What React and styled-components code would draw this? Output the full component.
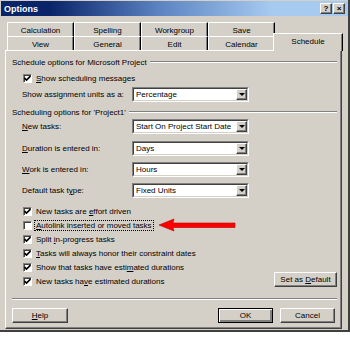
import React from 'react'
import styled, { createGlobalStyle, css } from 'styled-components'

const GlobalStyle = createGlobalStyle`
  html, body {
    margin: 0;
    padding: 0;
    background: #fff;
  }
  body {
    font-family: "Liberation Sans", Arial, sans-serif;
    font-size: 8px;
    color: #000;
  }
`

const FACE = '#d4d0c8'
const SHADOW = '#808080'
const DARK = '#404040'

const raised = css`
  border: 1px solid;
  border-color: #fff ${DARK} ${DARK} #fff;
  box-shadow: inset -1px -1px ${SHADOW};
`

const Window = styled.div`
  position: relative;
  width: 350px;
  height: 332px;
  box-sizing: border-box;
  background: ${FACE};
  border-right: 2px solid ${DARK};
  border-bottom: 2px solid ${DARK};
  display: flex;
  flex-direction: column;
`

const TitleBar = styled.div`
  height: 15px;
  margin: 1px 0 0 1px;
  padding: 0 3px;
  display: flex;
  align-items: center;
  background: linear-gradient(90deg, #0a246a 14%, #5a82c0 45%, #a6caf0 78%);
`

const Title = styled.span`
  flex: 1;
  color: #fff;
  font-weight: bold;
  font-size: 9px;
`

const CaptionButton = styled.div`
  width: 12px;
  height: 11px;
  box-sizing: border-box;
  margin-left: 1px;
  background: ${FACE};
  ${raised};
  display: flex;
  align-items: center;
  justify-content: center;
  font-weight: bold;
  font-size: 8px;
  line-height: 1;
`

const TabArea = styled.div`
  margin-top: 6px;
  padding-left: 7px;
  display: flex;
  flex-direction: column;
`

const TabRow = styled.div`
  display: flex;
  align-items: flex-end;
  height: 14px;
`

const Tab = styled.div`
  width: 67px;
  height: 14px;
  box-sizing: border-box;
  border-top: 1px solid #fff;
  border-left: 1px solid #fff;
  border-right: 1px solid #000;
  box-shadow: inset -1px 0 ${SHADOW};
  display: flex;
  align-items: center;
  justify-content: center;
  padding-top: 1px;

  ${p => p.$selected && css`
    position: relative;
    z-index: 1;
    width: 70px;
    height: 18px;
    margin: 0 0 -1px -2px;
    background: ${FACE};
    padding-top: 0;
    padding-bottom: 2px;
  `}
`

const Panel = styled.div`
  margin-left: 5px;
  width: 337px;
  height: 279px;
  box-sizing: border-box;
  ${raised};
  padding: 5px 4px 0 6px;
  display: flex;
  flex-direction: column;
  position: relative;
`

const GroupHeader = styled.div`
  height: 12px;
  display: flex;
  align-items: center;
  margin-top: ${p => p.$top || 0}px;

  &::after {
    content: '';
    flex: 1;
    margin-left: 3px;
    border-top: 1px solid ${SHADOW};
    border-bottom: 1px solid #fff;
  }
`

const FieldRow = styled.div`
  display: flex;
  align-items: center;
  height: 15px;
  margin-top: ${p => p.$top || 0}px;
  padding-left: 10px;
`

const Label = styled.span`
  width: 110px;
  flex-shrink: 0;
`

const Combo = styled.div`
  width: 117px;
  height: 15px;
  box-sizing: border-box;
  border: 1px solid;
  border-color: ${SHADOW} #fff #fff ${SHADOW};
  display: flex;
`

const ComboInner = styled.div`
  flex: 1;
  display: flex;
  border: 1px solid;
  border-color: ${DARK} ${FACE} ${FACE} ${DARK};
  background: #fff;
`

const ComboText = styled.span`
  flex: 1;
  padding-left: 2px;
  display: flex;
  align-items: center;
  white-space: nowrap;
  overflow: hidden;
`

const DropButton = styled.div`
  width: 11px;
  box-sizing: border-box;
  background: ${FACE};
  ${raised};
  display: flex;
  align-items: center;
  justify-content: center;

  &::before {
    content: '';
    border-left: 3px solid transparent;
    border-right: 3px solid transparent;
    border-top: 3px solid #000;
  }
`

const CheckRow = styled.div`
  height: 14px;
  display: flex;
  align-items: center;
  margin-top: ${p => p.$top || 0}px;
  padding-left: ${p => p.$indent || 0}px;
`

const Box = styled.div`
  width: 9px;
  height: 9px;
  box-sizing: border-box;
  border: 1px solid;
  border-color: ${SHADOW} #fff #fff ${SHADOW};
  box-shadow: inset 1px 1px ${DARK};
  background: #fff;
  margin-right: 3px;
  display: flex;
  align-items: center;
  justify-content: center;
`

const CheckText = styled.span`
  padding: 0 1px;
  ${p => p.$focus && css`
    outline: 1px dotted #000;
    outline-offset: 0;
  `}
`

const U = styled.span`
  text-decoration: underline;
`

const ChecksArea = styled.div`
  display: flex;
  align-items: flex-end;
  justify-content: space-between;
  margin-top: 6px;
`

const CheckList = styled.div`
  display: flex;
  flex-direction: column;
  padding-left: 11px;
`

const Button = styled.div`
  width: ${p => p.$w || 55}px;
  height: 15px;
  box-sizing: border-box;
  ${raised};
  display: flex;
  align-items: center;
  justify-content: center;
  margin-bottom: ${p => p.$bottom || 0}px;

  ${p => p.$default && css`
    border-color: #000;
    box-shadow: inset 1px 1px #fff, inset -2px -2px ${SHADOW};
  `}
`

const Separator = styled.div`
  margin-top: 10px;
  border-top: 1px solid ${SHADOW};
  border-bottom: 1px solid #fff;
`

const ButtonRow = styled.div`
  display: flex;
  align-items: center;
  gap: 7px;
  margin-top: 8px;
  padding-right: 2px;
`

const Spacer = styled.div`
  flex: 1;
`

const Arrow = styled.svg`
  position: absolute;
  left: 152px;
  top: 167px;
`

function Check({ checked }) {
  return (
    <Box>
      {checked && (
        <svg width="7" height="7" viewBox="0 0 7 7">
          <path d="M0.5 3 L2.5 5 L6.5 1" fill="none" stroke="#000" strokeWidth="1.6" />
        </svg>
      )}
    </Box>
  )
}

function ComboBox({ value }) {
  return (
    <Combo>
      <ComboInner>
        <ComboText>{value}</ComboText>
        <DropButton />
      </ComboInner>
    </Combo>
  )
}

const topTabs = ['Calculation', 'Spelling', 'Workgroup', 'Save']
const bottomTabs = ['View', 'General', 'Edit', 'Calendar', 'Schedule']

export default function App() {
  return (
    <>
      <GlobalStyle />
      <Window>
        <TitleBar>
          <Title>Options</Title>
          <CaptionButton>?</CaptionButton>
          <CaptionButton>×</CaptionButton>
        </TitleBar>

        <TabArea>
          <TabRow>
            {topTabs.map(t => <Tab key={t}>{t}</Tab>)}
          </TabRow>
          <TabRow>
            {bottomTabs.map(t => (
              <Tab key={t} $selected={t === 'Schedule'}>{t}</Tab>
            ))}
          </TabRow>
        </TabArea>

        <Panel>
          <GroupHeader>Schedule options for Microsoft Project</GroupHeader>
          <CheckRow $top={3} $indent={11}>
            <Check checked />
            <CheckText><U>S</U>how scheduling messages</CheckText>
          </CheckRow>
          <FieldRow $top={2}>
            <Label>Show assignment units as a:</Label>
            <ComboBox value="Percentage" />
          </FieldRow>

          <GroupHeader $top={4}>Scheduling options for 'Project1'</GroupHeader>
          <FieldRow $top={1}>
            <Label><U>N</U>ew tasks:</Label>
            <ComboBox value="Start On Project Start Date" />
          </FieldRow>
          <FieldRow $top={7}>
            <Label><U>D</U>uration is entered in:</Label>
            <ComboBox value="Days" />
          </FieldRow>
          <FieldRow $top={6}>
            <Label><U>W</U>ork is entered in:</Label>
            <ComboBox value="Hours" />
          </FieldRow>
          <FieldRow $top={6}>
            <Label>Default task t<U>y</U>pe:</Label>
            <ComboBox value="Fixed Units" />
          </FieldRow>

          <ChecksArea>
            <CheckList>
              <CheckRow>
                <Check checked />
                <CheckText>New tasks are <U>e</U>ffort driven</CheckText>
              </CheckRow>
              <CheckRow>
                <Check />
                <CheckText $focus><U>A</U>utolink inserted or moved tasks</CheckText>
              </CheckRow>
              <CheckRow>
                <Check checked />
                <CheckText>Split <U>i</U>n-progress tasks</CheckText>
              </CheckRow>
              <CheckRow>
                <Check checked />
                <CheckText><U>T</U>asks will always honor their constraint dates</CheckText>
              </CheckRow>
              <CheckRow>
                <Check checked />
                <CheckText>Show that tasks have esti<U>m</U>ated durations</CheckText>
              </CheckRow>
              <CheckRow>
                <Check checked />
                <CheckText>New tasks ha<U>v</U>e estimated durations</CheckText>
              </CheckRow>
            </CheckList>
            <Button $w={63} $bottom={1}>
              <span>Set as <U>D</U>efault</span>
            </Button>
          </ChecksArea>

          <Separator />

          <ButtonRow>
            <Button $w={56}><span><U>H</U>elp</span></Button>
            <Spacer />
            <Button $default>OK</Button>
            <Button>Cancel</Button>
          </ButtonRow>

          <Arrow width="82" height="14" viewBox="0 0 82 14">
            <path
              d="M1 7 L16 1 L15 5 L77 5 L77 9.5 L15 9.5 L16 13 Z"
              fill="#ff0000"
              stroke="#b00000"
              strokeWidth="0.6"
            />
          </Arrow>
        </Panel>
      </Window>
    </>
  )
}
